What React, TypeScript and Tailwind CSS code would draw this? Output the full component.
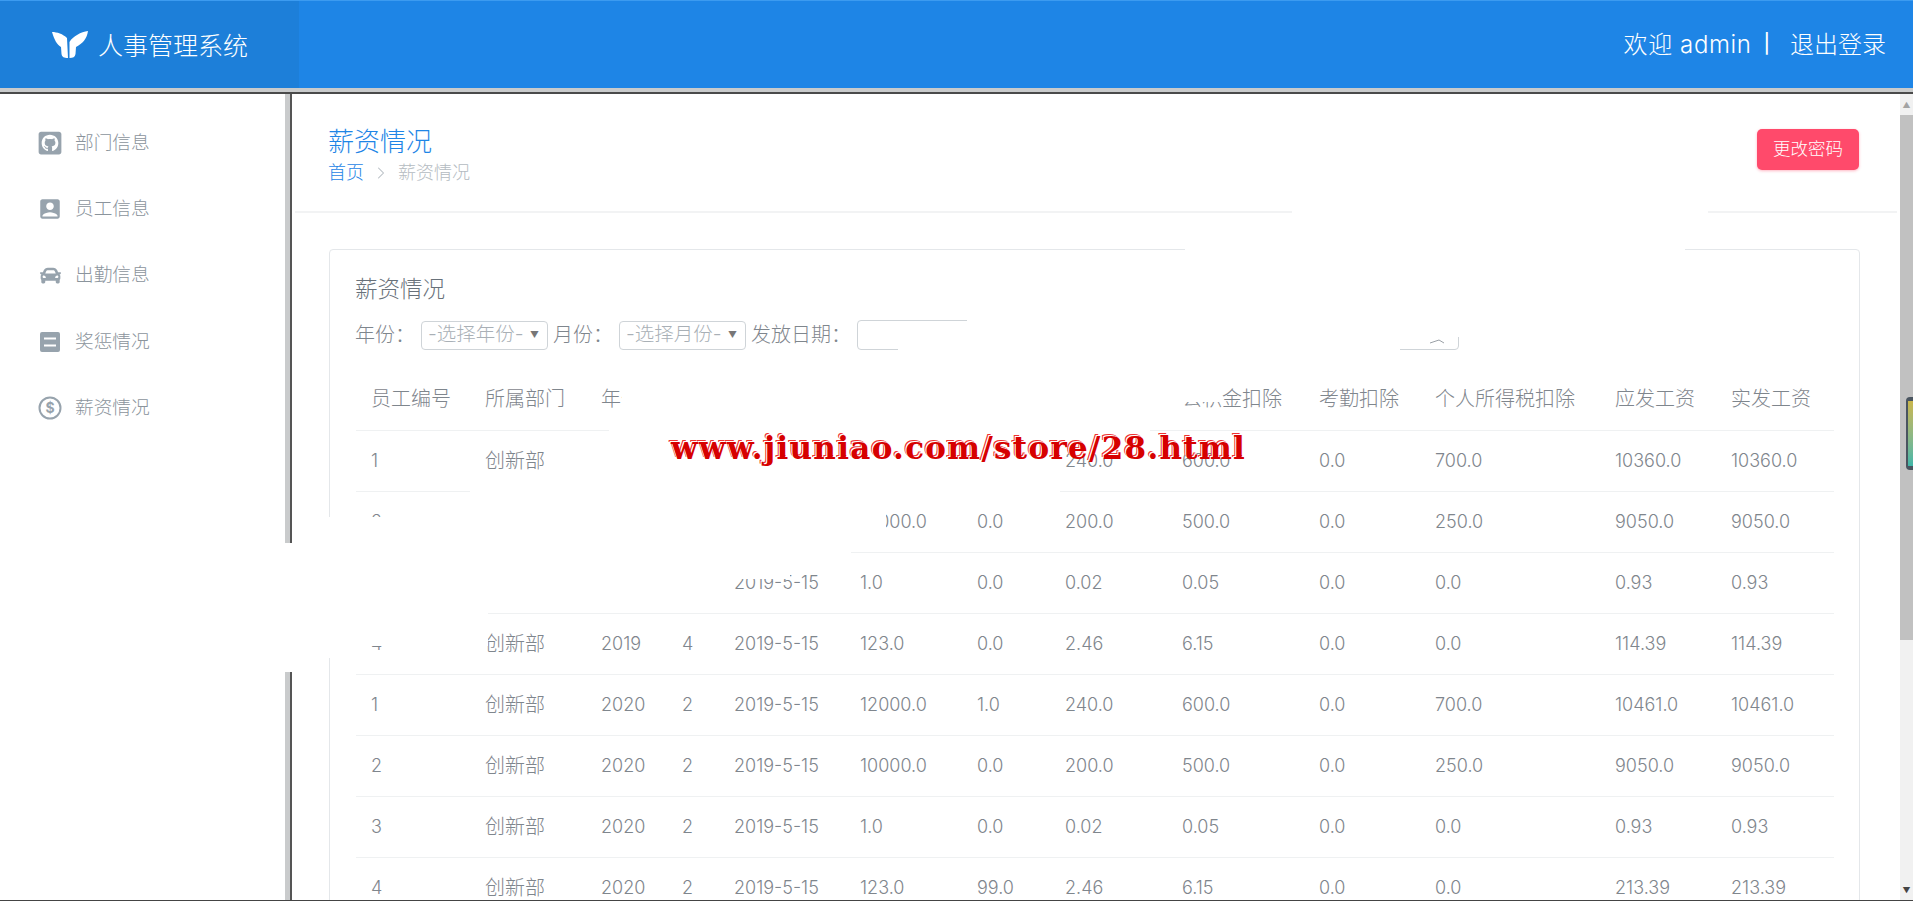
import { FaGithubSquare, FaCar } from "react-icons/fa";
import { MdAccountBox } from "react-icons/md";
import { ChevronRight } from "lucide-react";

const FONT = "font-['Inter','Noto_Sans_CJK_SC',sans-serif]";

const menu = ["部门信息", "员工信息", "出勤信息", "奖惩情况", "薪资情况"];

const heads = ["员工编号", "所属部门", "年份", "月份", "发放日期", "基本工资", "奖金", "社保扣除", "公积金扣除", "考勤扣除", "个人所得税扣除", "应发工资", "实发工资"];

const rows = [
  ["1", "创新部", "2019", "4", "2019-5-15", "12000.0", "0.0", "240.0", "600.0", "0.0", "700.0", "10360.0", "10360.0"],
  ["2", "创新部", "2019", "4", "2019-5-15", "10000.0", "0.0", "200.0", "500.0", "0.0", "250.0", "9050.0", "9050.0"],
  ["3", "创新部", "2019", "4", "2019-5-15", "1.0", "0.0", "0.02", "0.05", "0.0", "0.0", "0.93", "0.93"],
  ["4", "创新部", "2019", "4", "2019-5-15", "123.0", "0.0", "2.46", "6.15", "0.0", "0.0", "114.39", "114.39"],
  ["1", "创新部", "2020", "2", "2019-5-15", "12000.0", "1.0", "240.0", "600.0", "0.0", "700.0", "10461.0", "10461.0"],
  ["2", "创新部", "2020", "2", "2019-5-15", "10000.0", "0.0", "200.0", "500.0", "0.0", "250.0", "9050.0", "9050.0"],
  ["3", "创新部", "2020", "2", "2019-5-15", "1.0", "0.0", "0.02", "0.05", "0.0", "0.0", "0.93", "0.93"],
  ["4", "创新部", "2020", "2", "2019-5-15", "123.0", "99.0", "2.46", "6.15", "0.0", "0.0", "213.39", "213.39"],
];

function MenuIcon({ i }: { i: number }) {
  if (i === 0) return <FaGithubSquare className="w-[26px] h-[26px]" />;
  if (i === 1) return <MdAccountBox className="w-[26px] h-[26px]" />;
  if (i === 2) return <FaCar className="w-[21px] h-[21px]" />;
  if (i === 3)
    return (
      <svg viewBox="0 0 20 20" className="w-[20px] h-[20px]" fill="currentColor">
        <path fillRule="evenodd" d="M2 0h16a2 2 0 0 1 2 2v16a2 2 0 0 1-2 2H2a2 2 0 0 1-2-2V2a2 2 0 0 1 2-2ZM4 5.5v2h12v-2H4Zm0 7v2h12v-2H4Z" />
      </svg>
    );
  return (
    <svg viewBox="0 0 24 24" className="w-[24px] h-[24px]" fill="none" stroke="currentColor">
      <circle cx="12" cy="12" r="10.5" strokeWidth="2" />
      <text x="12" y="17" textAnchor="middle" fontSize="14" fontWeight="700" fill="currentColor" stroke="none">$</text>
    </svg>
  );
}

function Logo() {
  return (
    <svg viewBox="0 0 38 30" className="w-[38px] h-[30px]" fill="white">
      <path d="M1 2C6 2 12 4 16 8L17 28C13 28 11 27 10.5 24L10 17C6 15 3 9 1 2Z" />
      <path d="M37 1C36 9 31 14 25 17L24.5 24C24 27 22 28 18.5 28L18.5 12C22 6 30 2 37 1Z" />
    </svg>
  );
}

function FakeSelect({ label }: { label: string }) {
  return (
    <div className="w-[127px] h-[29px] border border-[#cfd4d8] rounded-[4px] flex items-center justify-between pl-[6px] pr-[8px] text-[19.5px] text-[#a9b0b6]">
      <span>{label}</span>
      <span className="text-[9px] text-[#777]">▼</span>
    </div>
  );
}

export default function App() {
  return (
    <div className={`relative w-[1913px] h-[901px] overflow-hidden bg-white ${FONT} font-light`}>
      {/* Top bar */}
      <header className="h-[94px] flex flex-col">
        <div className="h-[88px] bg-[#1e85e6] border-t border-[#3c9bf0] flex items-center text-white">
          <div className="w-[299px] h-full bg-[#1d7fd9] flex items-center pl-[51px] gap-[9px]">
            <Logo />
            <span className="text-[25px] leading-none pt-[3px]">人事管理系统</span>
          </div>
          <div className="ml-auto pr-[27px] flex items-center text-[24px]">
            <span className="tracking-[0.6px]">欢迎 admin</span>
            <span className="ml-[12px] mr-[16px] text-[19px] font-medium">|</span>
            <span className="ml-[4px]">退出登录</span>
          </div>
        </div>
        <div className="h-[6px] bg-[#c9cbcc] border-b-2 border-[#4a4a4a]" />
      </header>

      <div className="flex h-[806px]">
        {/* Sidebar */}
        <aside className="w-[292px] shrink-0 border-r-[2px] border-[#555]">
          <div className="h-full border-r-[5px] border-[#c9cbcc] pt-[16px]">
            {menu.map((m, i) => (
              <div key={m} className="h-[66.2px] flex items-center text-[18.7px] text-[#8b949c]">
                <div className="w-[75px] pl-[37px] flex justify-start text-[#97a3ad]">
                  <div className="w-[26px] flex justify-center">
                    <MenuIcon i={i} />
                  </div>
                </div>
                <span>{m}</span>
              </div>
            ))}
          </div>
        </aside>

        {/* Content */}
        <main className="flex-1 relative min-w-0">
          <div className="h-[119px] mx-[3px] border-b-[2px] border-[#f2f3f4] pl-[33px] pr-[38px] flex justify-between">
            <div className="pt-[30px]">
              <div className="text-[26px] leading-[36px] text-[#1e85e6]">薪资情况</div>
              <div className="text-[18px] leading-[26px] text-[#b4bbc1] flex items-center">
                <span className="text-[#1e85e6]">首页</span>
                <ChevronRight className="mx-[7px] w-[20px] h-[20px]" strokeWidth={1.25} />
                <span>薪资情况</span>
              </div>
            </div>
            <button className="mt-[35px] w-[102px] h-[41px] rounded-[5px] bg-[#ff4a6b] text-white text-[17.5px] shadow-[0_1px_3px_rgba(255,74,107,0.4)]">
              更改密码
            </button>
          </div>

          <section className="ml-[37px] mt-[36px] w-[1531px] h-[700px] border border-[#e4e7ea] rounded-[4px] pt-[23px] px-[25px]">
            <h2 className="text-[22.5px] leading-[32px] text-[#68717a]">薪资情况</h2>
            <div className="mt-[15px] flex items-center text-[20px] text-[#7f868d]">
              <span className="w-[66px]">年份：</span>
              <FakeSelect label="-选择年份-" />
              <span className="w-[66px] ml-[5px]">月份：</span>
              <FakeSelect label="-选择月份-" />
              <span className="w-[106px] ml-[5px]">发放日期：</span>
              <div className="w-[602px] h-[30px] border border-[#cfd4d8] rounded-[4px]" />
            </div>
            <table className="mt-[19px] ml-[1px] table-fixed w-[1478px] text-[#7f868d] border-collapse">
              <colgroup>
                <col className="w-[114px]" />
                <col className="w-[116px]" />
                <col className="w-[81px]" />
                <col className="w-[52px]" />
                <col className="w-[126px]" />
                <col className="w-[117px]" />
                <col className="w-[88px]" />
                <col className="w-[117px]" />
                <col className="w-[137px]" />
                <col className="w-[116px]" />
                <col className="w-[180px]" />
                <col className="w-[116px]" />
                <col className="w-[118px]" />
              </colgroup>
              <thead>
                <tr className="h-[61px] border-b border-[#eff1f2]">
                  {heads.map((h) => (
                    <th key={h} className="pl-[15px] text-left text-[20px] font-light whitespace-nowrap">{h}</th>
                  ))}
                </tr>
              </thead>
              <tbody>
                {rows.map((r, i) => (
                  <tr key={i} className="h-[61px] border-b border-[#eff1f2]">
                    {r.map((c, j) => (
                      <td key={j} className={`pl-[15px] whitespace-nowrap ${j === 1 ? "text-[20px]" : "text-[18px]"}`}>{c}</td>
                    ))}
                  </tr>
                ))}
              </tbody>
            </table>
          </section>
        </main>

        {/* Scrollbar */}
        <div className="w-[13px] shrink-0 bg-[#f1f1f1] flex flex-col items-center">
          <div className="h-[21px] flex items-center justify-center text-[8px] text-[#a3a3a3]">▲</div>
          <div className="w-full h-[525px] bg-[#c1c1c1]" />
          <div className="mt-auto h-[21px] flex items-center justify-center text-[8px] text-[#444]">▼</div>
        </div>
      </div>

      {/* Retouched white patches that sit over the page in the picture */}
      <div className="absolute left-[1292px] top-[205px] w-[416px] h-[14px] bg-white" />
      <div className="absolute left-[1185px] top-[240px] w-[500px] h-[20px] bg-white" />
      <div className="absolute left-[967px] top-[315px] w-[498px] h-[22px] bg-white" />
      <div className="absolute left-[898px] top-[337px] w-[502px] h-[20px] bg-white" />
      <div className="absolute left-[622px] top-[380px] w-[599px] h-[22px] bg-white" />
      <div className="absolute left-[622px] top-[402px] w-[561px] h-[26px] bg-white" />
      <div className="absolute left-[609px] top-[428px] w-[541px] h-[4px] bg-white" />
      <div className="absolute left-[546px] top-[432px] w-[514px] h-[60px] bg-white" />
      <div className="absolute left-[470px] top-[488px] w-[471px] h-[5px] bg-white" />
      <div className="absolute left-[470px] top-[493px] w-[416px] h-[24px] bg-white" />
      <div className="absolute left-[322px] top-[517px] w-[564px] h-[26px] bg-white" />
      <div className="absolute left-[280px] top-[543px] w-[606px] h-[8px] bg-white" />
      <div className="absolute left-[280px] top-[551px] w-[571px] h-[4px] bg-white" />
      <div className="absolute left-[280px] top-[555px] w-[510px] h-[24px] bg-white" />
      <div className="absolute left-[280px] top-[579px] w-[454px] h-[32px] bg-white" />
      <div className="absolute left-[280px] top-[611px] w-[208px] h-[35px] bg-white" />
      <div className="absolute left-[280px] top-[646px] w-[60px] h-[12px] bg-white" />
      <div className="absolute left-[280px] top-[658px] w-[15px] h-[14px] bg-white" />

      {/* Leftover bit of the date picker's icon */}
      <svg viewBox="0 0 16 6" className="absolute left-[1430px] top-[339px] w-[16px] h-[6px]" fill="none" stroke="#9aa0a6" strokeWidth="1">
        <path d="M0 4 L9 1 L14 4" />
      </svg>

      {/* Watermark */}
      <div className="absolute left-[671px] top-[428px] font-['DejaVu_Serif',serif] font-bold text-[31px] leading-[40px] tracking-[1.3px] text-[#d60000] whitespace-nowrap [text-shadow:-1px_-1px_0_#fff,-2px_-2px_0_#e33]">
        www.jiuniao.com/store/28.html
      </div>

      {/* Small side widget at the right edge */}
      <div className="absolute left-[1906px] top-[397px] w-[7px] h-[73px] rounded-l-[4px] bg-[#4a5560] pl-[2px] py-[4px]">
        <div className="h-full bg-gradient-to-b from-[#c9b64c] to-[#3fb6a8]" />
      </div>
      {/* Bottom edge of the captured window */}
      <div className="absolute left-0 bottom-0 w-full h-px bg-[#444]" />
    </div>
  );
}
